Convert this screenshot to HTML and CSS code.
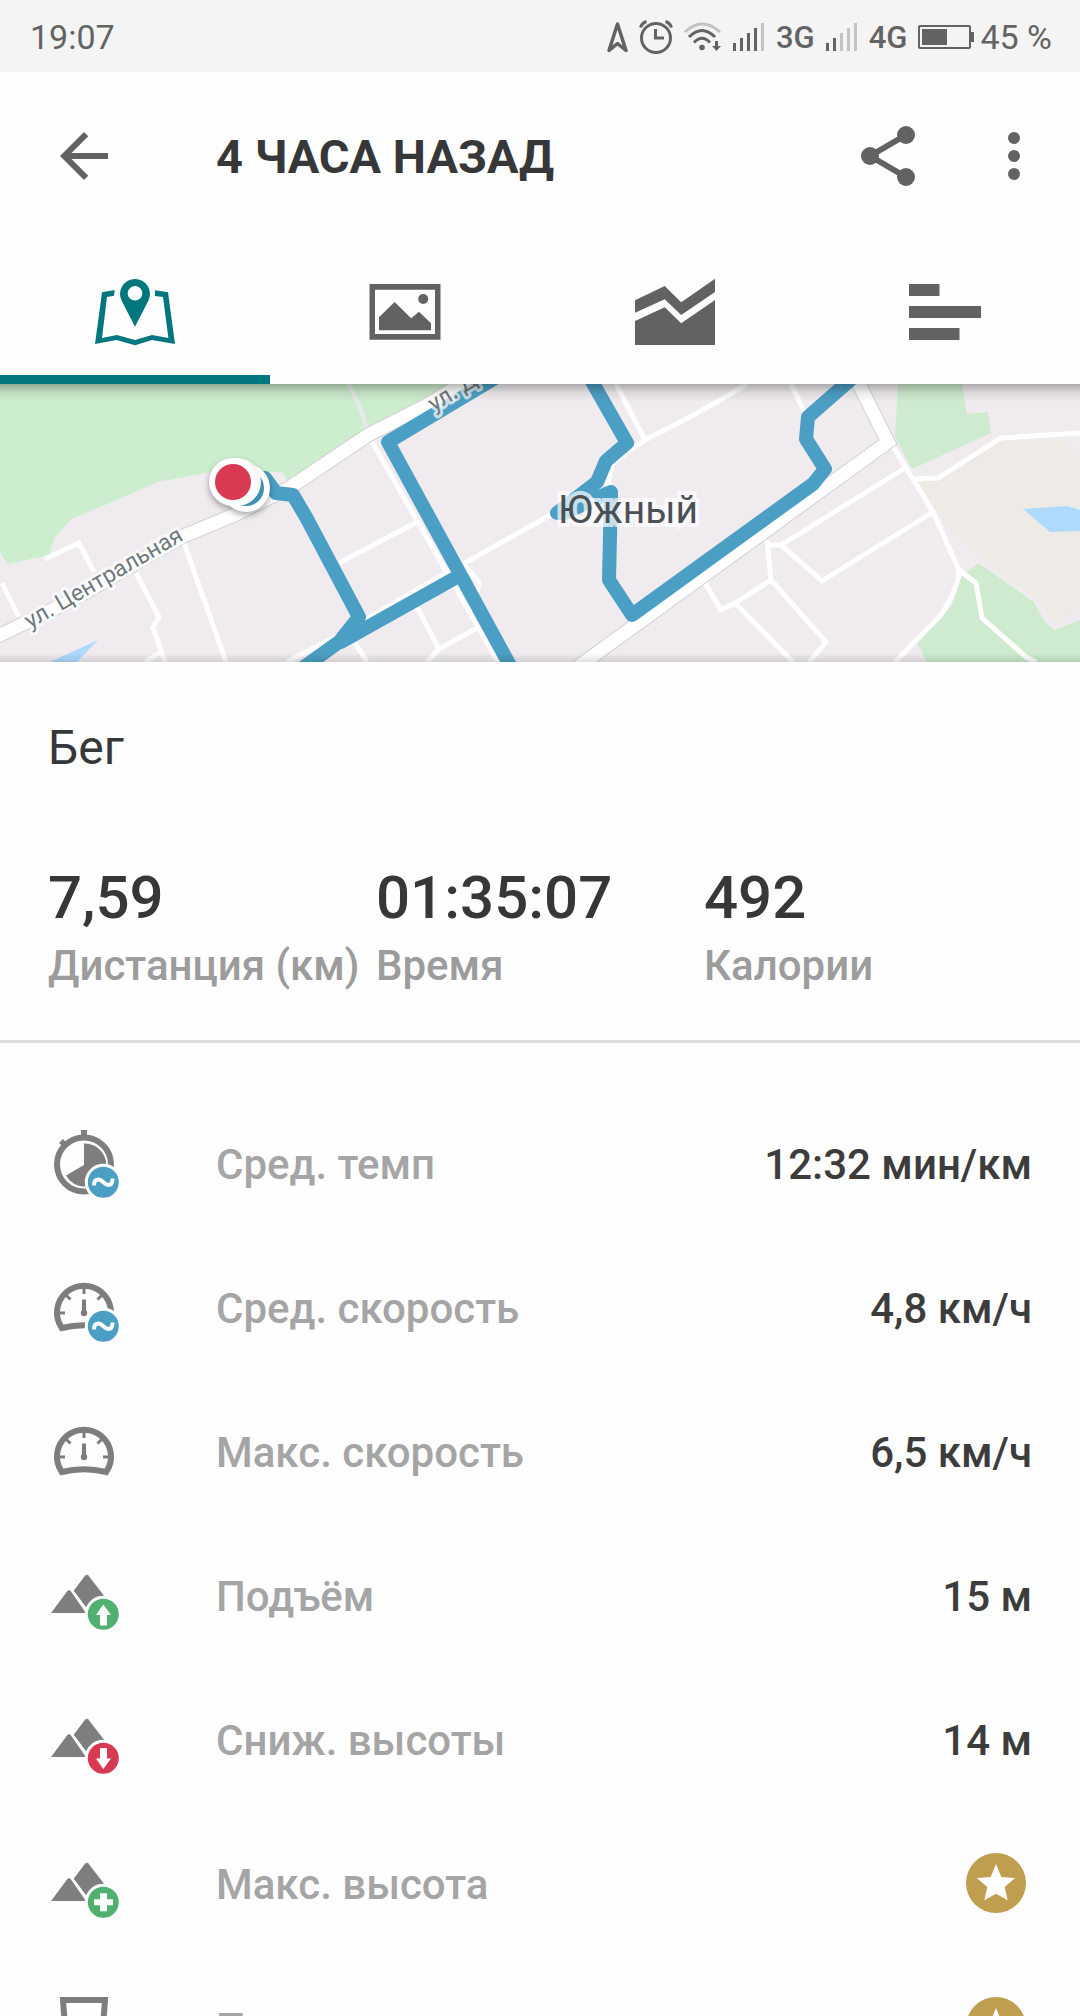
FILE: index.html
```html
<!DOCTYPE html>
<html lang="ru">
<head>
    <meta charset="utf-8">
    <meta name="viewport" content="width=device-width, initial-scale=1">
    <title>4 часа назад</title>
    <link rel="stylesheet" href="styles.css">
</head>
<body>
    <!-- shared icon parts -->
    <svg class="sprite" aria-hidden="true">
        <symbol id="gauge" viewBox="0 0 72 72">
            <path d="M13.8 57A27 27 0 1 1 58.2 57Q36 51.5 13.8 57Z" fill="none" stroke="#7e7e7e" stroke-width="6"/>
            <path d="M36 17v6M11 42h6M55 42h6M18.500 24.500l4 4M53.500 24.500l-4 4" stroke="#7e7e7e" stroke-width="3"/>
            <path d="M36 28.500v13" stroke="#7e7e7e" stroke-width="4"/>
            <circle cx="36" cy="42" r="3.200" fill="#7e7e7e"/>
        </symbol>
        <symbol id="mountains" viewBox="0 0 72 72">
            <path d="M37.200 16.500q1.600-1.600 3.200 0L57 38 39.500 50 25.700 31.700Z" fill="#7e7e7e"/>
            <path d="M19.400 32q1.600-1.500 3.200 0L38 54H3Z" fill="#7e7e7e"/>
        </symbol>
        <symbol id="average" viewBox="0 0 72 72">
            <circle cx="55.300" cy="55.300" r="17" fill="#4c9fc4" stroke="#fff" stroke-width="3"/>
            <path d="M46 58.500c0-4 1.500-6 4.300-6 4 0 6.200 5.500 10 5.500 2.700 0 4.200-2 4.200-6.500" fill="none" stroke="#fff" stroke-width="4"/>
        </symbol>
        <symbol id="star" viewBox="0 0 72 72">
            <circle cx="36" cy="36" r="30" fill="#bf9f4f"/>
            <path d="M36 17l5.300 13L55 31l-10.300 9 3 13.300L36 46.700l-11.700 6.600 3-13.300L16.700 31l14-1Z" fill="#fff"/>
        </symbol>
    </svg>

    <div class="app">
        <div class="status-bar">
            <span>19:07</span>
            <div class="status-icons">
                <svg width="21" height="32" viewBox="0 0 21 32"><path d="M10.500 3L19 29.500l-8.500-7-8.500 7Z" fill="none" stroke="#636363" stroke-width="3.500" stroke-linejoin="round"/></svg>
                <svg width="34" height="34" viewBox="0 0 34 34" fill="none" stroke="#636363" stroke-width="3"><circle cx="17" cy="18" r="14.500"/><path d="M16.500 9v9H25M1.500 7.500Q3 3 7.500 1.500M32.500 7.500Q31 3 26.500 1.500"/></svg>
                <svg width="38" height="30" viewBox="0 0 38 30" fill="none" stroke="#636363" stroke-width="3"><path d="M1 10Q18-6 36 10" stroke="#c3c3c3"/><path d="M5 15Q18 2 31 15M10 20.500Q18 12 26 20.500"/><circle cx="18" cy="25.500" r="2.800" fill="#636363" stroke="none"/><path d="M32.500 19v7" /><path d="M28 24h9l-4.500 5Z" fill="#636363" stroke="none"/></svg>
                <svg width="32" height="28" viewBox="0 0 32 28" fill="#636363"><path d="M0 20h3v8H0zM7 15h3v13H7zM14 10h3v18h-3zM21 5h3v23h-3z"/><path d="M28 0h3v28h-3z" fill="#c3c3c3"/></svg>
                <span class="network">3G</span>
                <svg width="32" height="28" viewBox="0 0 32 28" fill="#636363"><path d="M0 20h3v8H0zM7 15h3v13H7z"/><path d="M14 10h3v18h-3zM21 5h3v23h-3zM28 0h3v28h-3z" fill="#c3c3c3"/></svg>
                <span class="network">4G</span>
                <div class="battery">
                    <svg width="56" height="24" viewBox="0 0 56 24"><rect x="1" y="1" width="51" height="22" rx="1" fill="none" stroke="#636363" stroke-width="2"/><path d="M4 4h25v16H4zM53 7h3v10h-3z" fill="#636363"/></svg>
                    <span>45 %</span>
                </div>
            </div>
        </div>

        <header class="toolbar">
            <button class="icon-button" aria-label="Назад"><svg viewBox="0 0 24 24"><path d="M20 11H7.830l5.590-5.590L12 4l-8 8 8 8 1.410-1.410L7.830 13H20z"/></svg></button>
            <h1 class="title">4 ЧАСА НАЗАД</h1>
            <button class="icon-button" aria-label="Поделиться"><svg viewBox="0 0 24 24"><path d="M18 5L6 12l12 7" fill="none" stroke="#616362" stroke-width="2"/><circle cx="18" cy="5" r="3"/><circle cx="6" cy="12" r="3"/><circle cx="18" cy="19" r="3"/></svg></button>
            <button class="icon-button" aria-label="Ещё"><svg viewBox="0 0 24 24"><circle cx="12" cy="6" r="2"/><circle cx="12" cy="12" r="2"/><circle cx="12" cy="18" r="2"/></svg></button>
        </header>

        <nav class="tabs">
            <button class="tab active" aria-label="Карта"><svg viewBox="0 0 90 90"><path d="M5 77L12 25.300 24.700 23 24 28.700 17 30 12 71 27 68 45 73 62 68 78.400 71 73 30 65 29V23.300L78 25.300 85 77 62 73 45 78.300 26.400 73Z"/><path fill-rule="evenodd" d="M45 59.700L31.300 33A15 15 0 1 1 58.700 33ZM45 19a7.300 7.300 0 1 0 .01 0Z"/></svg></button>
            <button class="tab" aria-label="Фото"><svg viewBox="0 0 90 90"><path fill-rule="evenodd" d="M9.500 17h71v55.700h-71zM15 22.700V67h60V22.700z"/><path d="M19 63.300v-13L34.600 35 51.200 51.300 59 44.700l12 11.600v7z"/><circle cx="63.200" cy="32" r="5"/></svg></button>
            <button class="tab" aria-label="Графики"><svg viewBox="0 0 90 90"><path d="M5 33.300L34.700 19 51.200 35.300 85 11.700V25L51.200 48 34.700 32.300 5 45.700ZM5 54l29.700-13.700 16.500 16L85 33v45H5Z"/></svg></button>
            <button class="tab" aria-label="Круги"><svg viewBox="0 0 90 90"><path d="M9 17h30.500v12H9zM9 39h72v12H9zM9 61h50.500v12H9z"/></svg></button>
        </nav>

        <div class="map">
            <svg viewBox="0 0 1080 278">
                <rect width="1080" height="278" fill="#efebef"/>
                <!-- parks, field, water -->
                <g fill="#cdeece">
                    <path d="M0 0H451L368 44 289 99 282 88H212L158 98 117 116 71 135 58 150Q51 158 50 171L7 180 0 168Z"/>
                    <path d="M898 0L895 53 912 85 991 49 988 28 967 30 962 0Z" fill="#ceebcf"/>
                    <path d="M978 179L1034 218Q1044 240 1055 246L1080 236V278H927L917 259 952 221 961 193Z" fill="#ceebcf"/>
                </g>
                <path d="M919 99L939 94 1001 55 1063 56 1080 74V223L1058 239 1034 214 953 149 936 128Z" fill="#eeebe6"/>
                <path d="M1023 125L1067 122 1080 126V147L1050 148ZM50 278L98 256 77 278Z" fill="#aedaff"/>
                <!-- small streets -->
                <path d="M348 0Q361 22 367 46" fill="none" stroke="#ebe8ec" stroke-width="4"/>
                <g fill="none" stroke="#fff" stroke-width="5">
                    <path d="M372 58L498 278M339 179L417 138M554 129L463 180 479 198 477 209M465 222l8 4M365 236L451 186M287 278L339 251M417 223L439 265 427 278M439 265L477 244M355 259L367 278"/>
                    <path d="M184 159L226 278M136 189L159 233 153 243 165 278M159 269L145 278M45 175L79 159 94 188M2 199L19 233"/>
                    <path d="M616 0L645 56M747 0Q700 29 645 56L630 66 612 80 608 100 613 115V198M791 0L805 29"/>
                    <path d="M915 95L938 94 1001 54 1080 49M905 84L781 161H769M767 156L771 196 826 258 809 278M771 196L735 219 721 226 705 199M735 219L793 278M781 161L822 197 933 128"/>
                    <path d="M891 59L933 128 959 186Q959 203 941 231L895 278M959 186L976 199 982 234 1026 273 1036 278"/>
                </g>
                <!-- main roads -->
                <g fill="none">
                    <path d="M-10 256L70 217 181 153 234 131 289 104 368 51 427 21 470-5M855-8L888 58 575 285" stroke="#d0d2d6" stroke-width="15"/>
                    <path d="M-10 256L70 217 181 153 234 131 289 104 368 51 427 21 470-5M855-8L888 58 575 285" stroke="#fff" stroke-width="13"/>
                </g>
                <!-- route -->
                <g fill="none" stroke="#4c9fc4" stroke-width="14" stroke-linejoin="round" stroke-linecap="round">
                    <path d="M265 94L276 109 293 111 306 133 359 233 339 258 300 286M457 193L341 258"/>
                    <path d="M495-6L388 58 513 287"/>
                    <path d="M590-6L627 59 606 77 597 98 557 129 564 129 611 108 609 196 632 231 813 100 825 85 806 55 808 33 857-10"/>
                </g>
                <g class="street" transform="translate(30 245) rotate(-30)"><text>ул. Центральная</text></g>
                <g class="street" transform="translate(434 28) rotate(-32)"><text>ул. Д</text></g>
                <text class="district" x="558" y="139">Южный</text>
                <!-- start and finish -->
                <g class="pin">
                    <circle cx="246" cy="104" r="24" fill="#fff"/>
                    <circle cx="246" cy="104" r="18" fill="#3f8db0"/>
                    <circle cx="237" cy="98" r="24" fill="#f7f7f7"/>
                    <circle cx="233" cy="98" r="24" fill="#fff"/>
                    <circle cx="233" cy="98" r="18" fill="#d73a52"/>
                </g>
            </svg>
        </div>

        <section class="summary">
            <h2 class="sport">Бег</h2>
            <div class="totals">
                <div><p class="total-value">7,59</p><p class="total-label">Дистанция (км)</p></div>
                <div><p class="total-value">01:35:07</p><p class="total-label">Время</p></div>
                <div><p class="total-value">492</p><p class="total-label">Калории</p></div>
            </div>
        </section>

        <ul class="details">
            <li class="row">
                <svg class="row-icon" viewBox="0 0 72 72"><circle cx="36" cy="37.500" r="27" fill="none" stroke="#7e7e7e" stroke-width="6"/><path d="M33 3h6v6h-6zM11 16l4-4 5 5-4 4zM36 38V16.500A21.500 21.500 0 1 1 18 48.500Z" fill="#7e7e7e"/><use href="#average"/></svg>
                <span class="row-label">Сред. темп</span>
                <span class="row-value">12:32 мин/км</span>
            </li>
            <li class="row">
                <svg class="row-icon" viewBox="0 0 72 72"><use href="#gauge"/><use href="#average"/></svg>
                <span class="row-label">Сред. скорость</span>
                <span class="row-value">4,8 км/ч</span>
            </li>
            <li class="row">
                <svg class="row-icon" viewBox="0 0 72 72"><use href="#gauge"/></svg>
                <span class="row-label">Макс. скорость</span>
                <span class="row-value">6,5 км/ч</span>
            </li>
            <li class="row">
                <svg class="row-icon" viewBox="0 0 72 72"><use href="#mountains"/><circle cx="55.300" cy="55.300" r="17" fill="#4fb06f" stroke="#fff" stroke-width="3"/><path d="M55.300 45.500L63 56h-4v10.500h-7V56h-4z" fill="#fff"/></svg>
                <span class="row-label">Подъём</span>
                <span class="row-value">15 м</span>
            </li>
            <li class="row">
                <svg class="row-icon" viewBox="0 0 72 72"><use href="#mountains"/><circle cx="55.300" cy="55.300" r="17" fill="#d73a52" stroke="#fff" stroke-width="3"/><path d="M55.300 66L63 55.500h-4V45h-7v10.500h-4z" fill="#fff"/></svg>
                <span class="row-label">Сниж. высоты</span>
                <span class="row-value">14 м</span>
            </li>
            <li class="row">
                <svg class="row-icon" viewBox="0 0 72 72"><use href="#mountains"/><circle cx="55.300" cy="55.300" r="17" fill="#4fb06f" stroke="#fff" stroke-width="3"/><path d="M52 46.300h7v6h6v6h-6v6h-7v-6h-6v-6h6z" fill="#fff"/></svg>
                <span class="row-label">Макс. высота</span>
                <svg class="row-icon" viewBox="0 0 72 72"><use href="#star"/></svg>
            </li>
            <li class="row">
                <svg class="row-icon" viewBox="0 0 72 72"><path d="M15 9H57L53 63H19Z" fill="none" stroke="#7e7e7e" stroke-width="6"/></svg>
                <span class="row-label">Потеря</span>
                <svg class="row-icon" viewBox="0 0 72 72"><use href="#star"/></svg>
            </li>
        </ul>
    </div>
</body>
</html>
```
FILE: styles.css
```css
* {
    box-sizing: border-box;
}
body {
    margin: 0;
    background-color: #fefefe;
    color: #363738;
    font-family: Roboto, "Noto Sans", sans-serif;
}
h1, h2, p, ul {
    margin: 0;
    padding: 0;
}
button {
    border: 0;
    padding: 0;
    background: none;
    color: inherit;
    font: inherit;
}
svg {
    display: block;
}
.sprite {
    position: absolute;
    width: 0;
    height: 0;
}
.app {
    display: flex;
    flex-direction: column;
    height: 100vh;
    overflow: hidden;
}
.app > * {
    flex-shrink: 0;
}

/* status bar */
.status-bar {
    display: flex;
    align-items: center;
    justify-content: space-between;
    height: 72px;
    padding: 2px 28px 0 30px;
    background-color: #f4f4f4;
    color: #636363;
    font-size: 34px;
}
.status-icons {
    display: flex;
    align-items: center;
    gap: 11px;
}
.network {
    font-size: 31px;
    font-weight: 500;
}
.battery {
    display: flex;
    align-items: center;
    gap: 6px;
}

/* toolbar and tabs */
.toolbar {
    display: flex;
    align-items: center;
    gap: 54px;
    height: 168px;
    padding: 0 30px 0 48px;
}
.icon-button {
    width: 72px;
    height: 72px;
    fill: #616362;
}
.title {
    flex: 1;
    padding-left: 42px;
    font-size: 47px;
    font-weight: 700;
}
.tabs {
    display: flex;
    height: 144px;
}
.tab {
    display: flex;
    flex: 1;
    align-items: center;
    justify-content: center;
    border-bottom: 9px solid transparent;
    padding-top: 9px;
    fill: #616362;
}
.tab svg {
    width: 90px;
    height: 90px;
}
.tab.active {
    border-color: #00767f;
    fill: #00767f;
}

/* map */
.map {
    position: relative;
}
.map svg {
    width: 100%;
}
.map::after {
    content: "";
    position: absolute;
    inset: 0;
    background:
        linear-gradient(rgba(0, 0, 0, 0.28), rgba(0, 0, 0, 0.08) 9px, transparent 18px),
        linear-gradient(to top, rgba(0, 0, 0, 0.12), transparent 9px);
}
.street {
    fill: #70777c;
    font-size: 23px;
    stroke: rgba(255, 255, 255, 0.7);
    stroke-width: 6px;
    stroke-linejoin: round;
    paint-order: stroke;
}
.district {
    fill: #4a5056;
    font-size: 39px;
    stroke: rgba(255, 255, 255, 0.7);
    stroke-width: 8px;
    paint-order: stroke;
}
.pin {
    filter: drop-shadow(0 3px 3px rgba(0, 0, 0, 0.35));
}

/* summary */
.summary {
    padding: 58px 48px 50px;
    border-bottom: 3px solid #dfdfdf;
}
.sport {
    margin-bottom: 86px;
    font-size: 48px;
    font-weight: 400;
    line-height: 56px;
}
.totals {
    display: grid;
    grid-template-columns: repeat(3, 1fr);
}
.total-value {
    margin-bottom: 8px;
    font-size: 60px;
    font-weight: 500;
    line-height: 72px;
}
.total-label {
    color: #9b9c9b;
    font-size: 42px;
    font-weight: 500;
    line-height: 48px;
    white-space: nowrap;
}

/* details */
.details {
    padding-top: 48px;
    list-style: none;
}
.row {
    display: flex;
    align-items: center;
    height: 144px;
    padding: 0 48px;
    font-size: 42px;
    font-weight: 500;
}
.row-icon {
    width: 72px;
    height: 72px;
}
.row-label,
.row-value {
    padding-top: 2px;
}
.row-label {
    flex: 1;
    padding-left: 96px;
    color: #a5a5a5;
}
.row-value {
    color: #3c3c3c;
}
```
